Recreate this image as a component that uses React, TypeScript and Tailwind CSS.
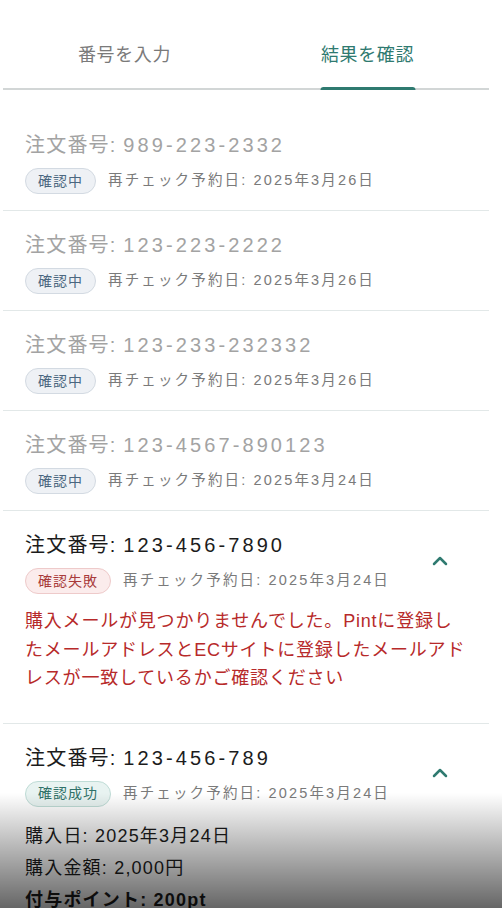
import { ChevronUp } from "lucide-react";

type Status = "pending" | "failed" | "success";

type Order = {
  id: string;
  status: Status;
  recheck: string;
  expanded?: boolean;
};

const orders: Order[] = [
  { id: "989-223-2332", status: "pending", recheck: "2025年3月26日" },
  { id: "123-223-2222", status: "pending", recheck: "2025年3月26日" },
  { id: "123-233-232332", status: "pending", recheck: "2025年3月26日" },
  { id: "123-4567-890123", status: "pending", recheck: "2025年3月24日" },
  { id: "123-456-7890", status: "failed", recheck: "2025年3月24日", expanded: true },
  { id: "123-456-789", status: "success", recheck: "2025年3月24日", expanded: true },
];

function Badge({ status }: { status: Status }) {
  if (status === "failed") {
    return (
      <span className="inline-flex h-[26px] items-center rounded-full border border-[#eecaca] bg-[#fbecec] px-[12px] text-[14px] tracking-[1px] text-[#a83a3a]">
        確認失敗
      </span>
    );
  }
  if (status === "success") {
    return (
      <span className="inline-flex h-[26px] items-center rounded-full border border-[#bfdcd6] bg-[#e8f3f1] px-[12px] text-[14px] tracking-[1px] text-[#2f7168]">
        確認成功
      </span>
    );
  }
  return (
    <span className="inline-flex h-[26px] items-center rounded-full border border-[#d3dae2] bg-[#eef1f5] px-[12px] text-[14px] tracking-[1px] text-[#4b6780]">
      確認中
    </span>
  );
}

function OrderRow({ order }: { order: Order }) {
  const title = order.expanded ? "text-[#1c1c1c]" : "text-[#a3a3a3]";
  return (
    <div className="border-b border-[#e2e8e8] pl-[22px] pr-[37px] pt-5 pb-4">
      <div className="flex items-center justify-between">
        <div>
          <div className={`text-[20px] leading-7 ${title}`}>
            <span className="tracking-[1.2px]">注文番号: </span>
            <span className="tracking-[3.1px]">{order.id}</span>
          </div>
          <div className="mt-[9px] flex items-center gap-3">
            <Badge status={order.status} />
            <span className="text-[14.5px] tracking-[2.15px] text-[#7a7a7a]">再チェック予約日: {order.recheck}</span>
          </div>
        </div>
        {order.expanded && <ChevronUp className="-mt-1 h-6 w-6 text-[#2f7a70]" strokeWidth={2.5} />}
      </div>

      {order.status === "failed" && (
        <p className="mt-[13px] pb-[14px] text-[18px] leading-[28.5px] tracking-[0.8px] whitespace-nowrap text-[#b72a2a]">
          <span className="block">購入メールが見つかりませんでした。Pintに登録し</span>
          <span className="block">たメールアドレスとECサイトに登録したメールアド</span>
          <span className="block">レスが一致しているかご確認ください</span>
        </p>
      )}

      {order.status === "success" && (
        <div className="mt-[13px] text-[18px] leading-[32px] tracking-[1.2px] text-[#1c1c1c]">
          <p>購入日: 2025年3月24日</p>
          <p>購入金額: 2,000円</p>
          <p className="font-bold">付与ポイント: 200pt</p>
        </div>
      )}
    </div>
  );
}

export default function App() {
  return (
    <div
      className="relative h-[908px] overflow-hidden bg-white"
      style={{ fontFamily: '"Liberation Sans", "Noto Sans CJK JP", sans-serif' }}
    >
      <div className="ml-[3px] w-[486px]">
        <div className="flex border-b-2 border-[#d2d6d6]">
          <div className="flex-1 pt-[41px] pb-[19px] text-center text-[18px] leading-7 tracking-[0.6px] text-[#7a7a7a]">
            番号を入力
          </div>
          <div className="relative flex-1 pt-[41px] pb-[19px] text-center text-[18px] leading-7 tracking-[0.6px] text-[#2f7a70]">
            結果を確認
            <div className="absolute bottom-[-2px] left-1/2 h-[3px] w-[95px] -translate-x-1/2 rounded-t-sm bg-[#2f7a70]" />
          </div>
        </div>

        <div className="pt-[21px]">
          {orders.map((o) => (
            <OrderRow key={o.id} order={o} />
          ))}
        </div>
      </div>

      <div className="pointer-events-none absolute inset-x-0 bottom-0 h-[115px] bg-gradient-to-b from-transparent to-black/60" />
    </div>
  );
}
